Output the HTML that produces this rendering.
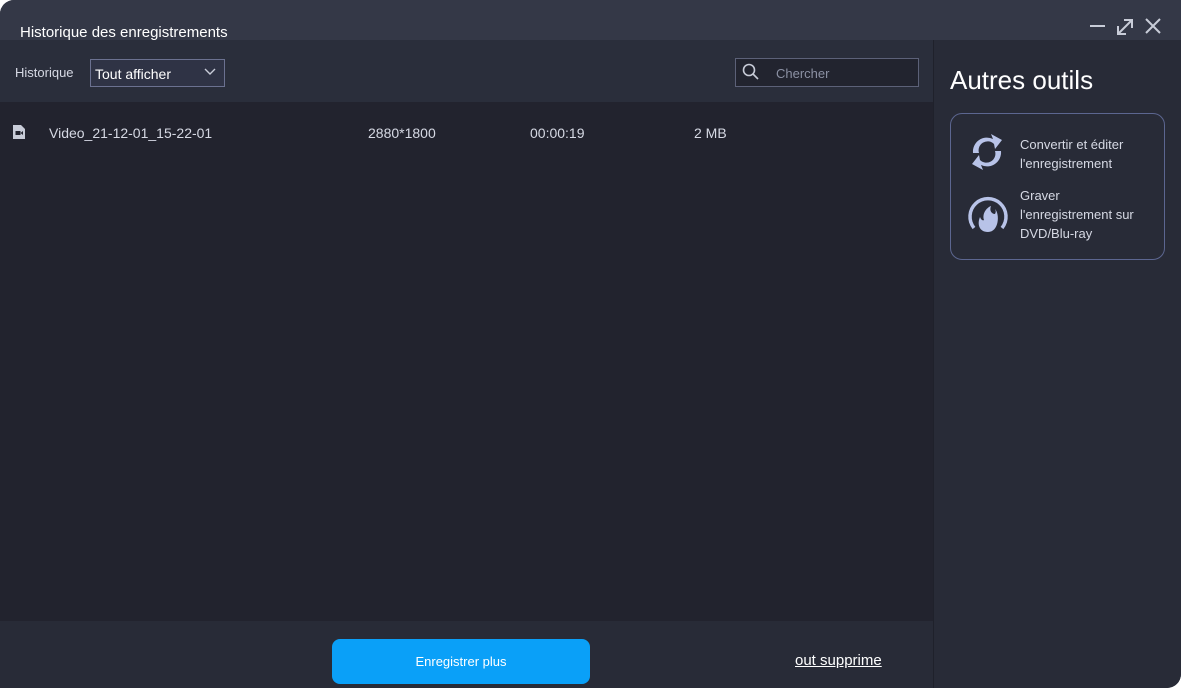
<!DOCTYPE html>
<html><head><meta charset="utf-8"><style>
*{margin:0;padding:0;box-sizing:border-box}
body{width:1181px;height:688px;background:#fff;font-family:"Liberation Sans",sans-serif;overflow:hidden;position:relative}
.win{position:absolute;left:0;top:0;width:1181px;height:688px;background:#282b37;border-radius:14px 0 14px 0;overflow:hidden}
.title{position:absolute;left:0;top:0;width:1181px;height:40px;background:#343847}
.title span{position:absolute;left:20px;top:24px;color:#fff;font-size:15px}
.tb{position:absolute;left:0;top:40px;width:933px;height:62px;background:#2a2e3b}
.list{position:absolute;left:0;top:102px;width:933px;height:519px;background:#22232e}
.right{position:absolute;left:933px;top:40px;width:248px;height:648px;background:#282b37;border-left:1px solid #1f212b}
.bottom{position:absolute;left:0;top:621px;width:933px;height:67px;background:#282b37}
.t{position:absolute;color:#d6d9e4;font-size:14px;white-space:nowrap}
</style></head><body><div class="win">
<div class="title"><span>Historique des enregistrements</span>
<svg style="position:absolute;left:1088px;top:16px" width="80" height="22" viewBox="0 0 80 22" fill="none" stroke="#c8ccd8" stroke-width="2"><path d="M2 10H17"/><path d="M30 18L44 4M36 4H44V12M30 10V18H38"/><path d="M58 3L72 17M72 3L58 17"/></svg></div>
<div class="tb">
<div class="t" style="left:15px;top:25px;font-size:13px">Historique</div>
<div style="position:absolute;left:90px;top:19px;width:135px;height:28px;border:1px solid #6b7190;background:#2f3345"></div>
<div class="t" style="left:95px;top:26px;color:#fff;font-size:14px">Tout afficher</div>
<svg style="position:absolute;left:204px;top:28px" width="12" height="8" viewBox="0 0 12 8" fill="none" stroke="#c8ccd8" stroke-width="1.4"><path d="M1 1L6 6L11 1"/></svg>
<div style="position:absolute;left:735px;top:18px;width:184px;height:29px;border:1px solid #5c6178;background:#22242f"></div>
<svg style="position:absolute;left:742px;top:23px" width="18" height="18" viewBox="0 0 18 18" fill="none" stroke="#c8ccd8" stroke-width="1.6"><circle cx="7" cy="7" r="5.5"/><path d="M11 11L16 16"/></svg>
<div class="t" style="left:776px;top:26px;color:#8b90a3;font-size:13px">Chercher</div>
</div>
<div class="list">
<svg style="position:absolute;left:13px;top:23px" width="12" height="14" viewBox="0 0 12 14"><path d="M0 0H8L12 4V14H0Z" fill="#c8ccd8"/><rect x="2.5" y="6" width="5" height="4" fill="#22232e"/><path d="M7.5 8L10 6V10Z" fill="#22232e"/></svg>
<div class="t" style="left:49px;top:23px">Video_21-12-01_15-22-01</div>
<div class="t" style="left:368px;top:23px">2880*1800</div>
<div class="t" style="left:530px;top:23px">00:00:19</div>
<div class="t" style="left:694px;top:23px">2 MB</div>
</div>
<div class="bottom">
<div style="position:absolute;left:332px;top:18px;width:258px;height:45px;background:#0aa0f8;border-radius:8px;color:#fff;font-size:13px;text-align:center;line-height:45px">Enregistrer plus</div>
<div class="t" style="left:795px;top:31px;color:#fff;font-size:15px;text-decoration:underline">out supprime</div>
</div>
<div class="right">
<div class="t" style="left:16px;top:25px;color:#fff;font-size:26px">Autres outils</div>
<div style="position:absolute;left:16px;top:73px;width:215px;height:147px;border:1px solid #5c6690;border-radius:12px"></div>
<svg style="position:absolute;left:35px;top:91px" width="36" height="42" viewBox="0 0 36 42" fill="#b8c3e8"><path d="M4 22A14 14 0 0 1 24 8L22 3L33 9L26 18L25 13A9 9 0 0 0 10 22Z"/><path d="M32 20A14 14 0 0 1 12 34L14 39L3 33L10 24L11 29A9 9 0 0 0 26 20Z"/></svg>
<svg style="position:absolute;left:32px;top:152px" width="44" height="44" viewBox="0 0 44 44"><path d="M8 36A18 18 0 1 1 36 36" fill="none" stroke="#b8c3e8" stroke-width="3.5"/><path d="M22 40C13 40 11 32 14 25C15 28 17 29 18 28C16 22 20 16 25 14C23 19 26 22 29 22C30 20 30 19 29 17C34 22 33 40 22 40Z" fill="#b8c3e8"/></svg>
<div class="t" style="left:86px;top:95px;font-size:13px;line-height:19px">Convertir et éditer<br>l'enregistrement</div>
<div class="t" style="left:86px;top:146px;font-size:13px;line-height:19px">Graver<br>l'enregistrement sur<br>DVD/Blu-ray</div>
</div>
</div></body></html>
